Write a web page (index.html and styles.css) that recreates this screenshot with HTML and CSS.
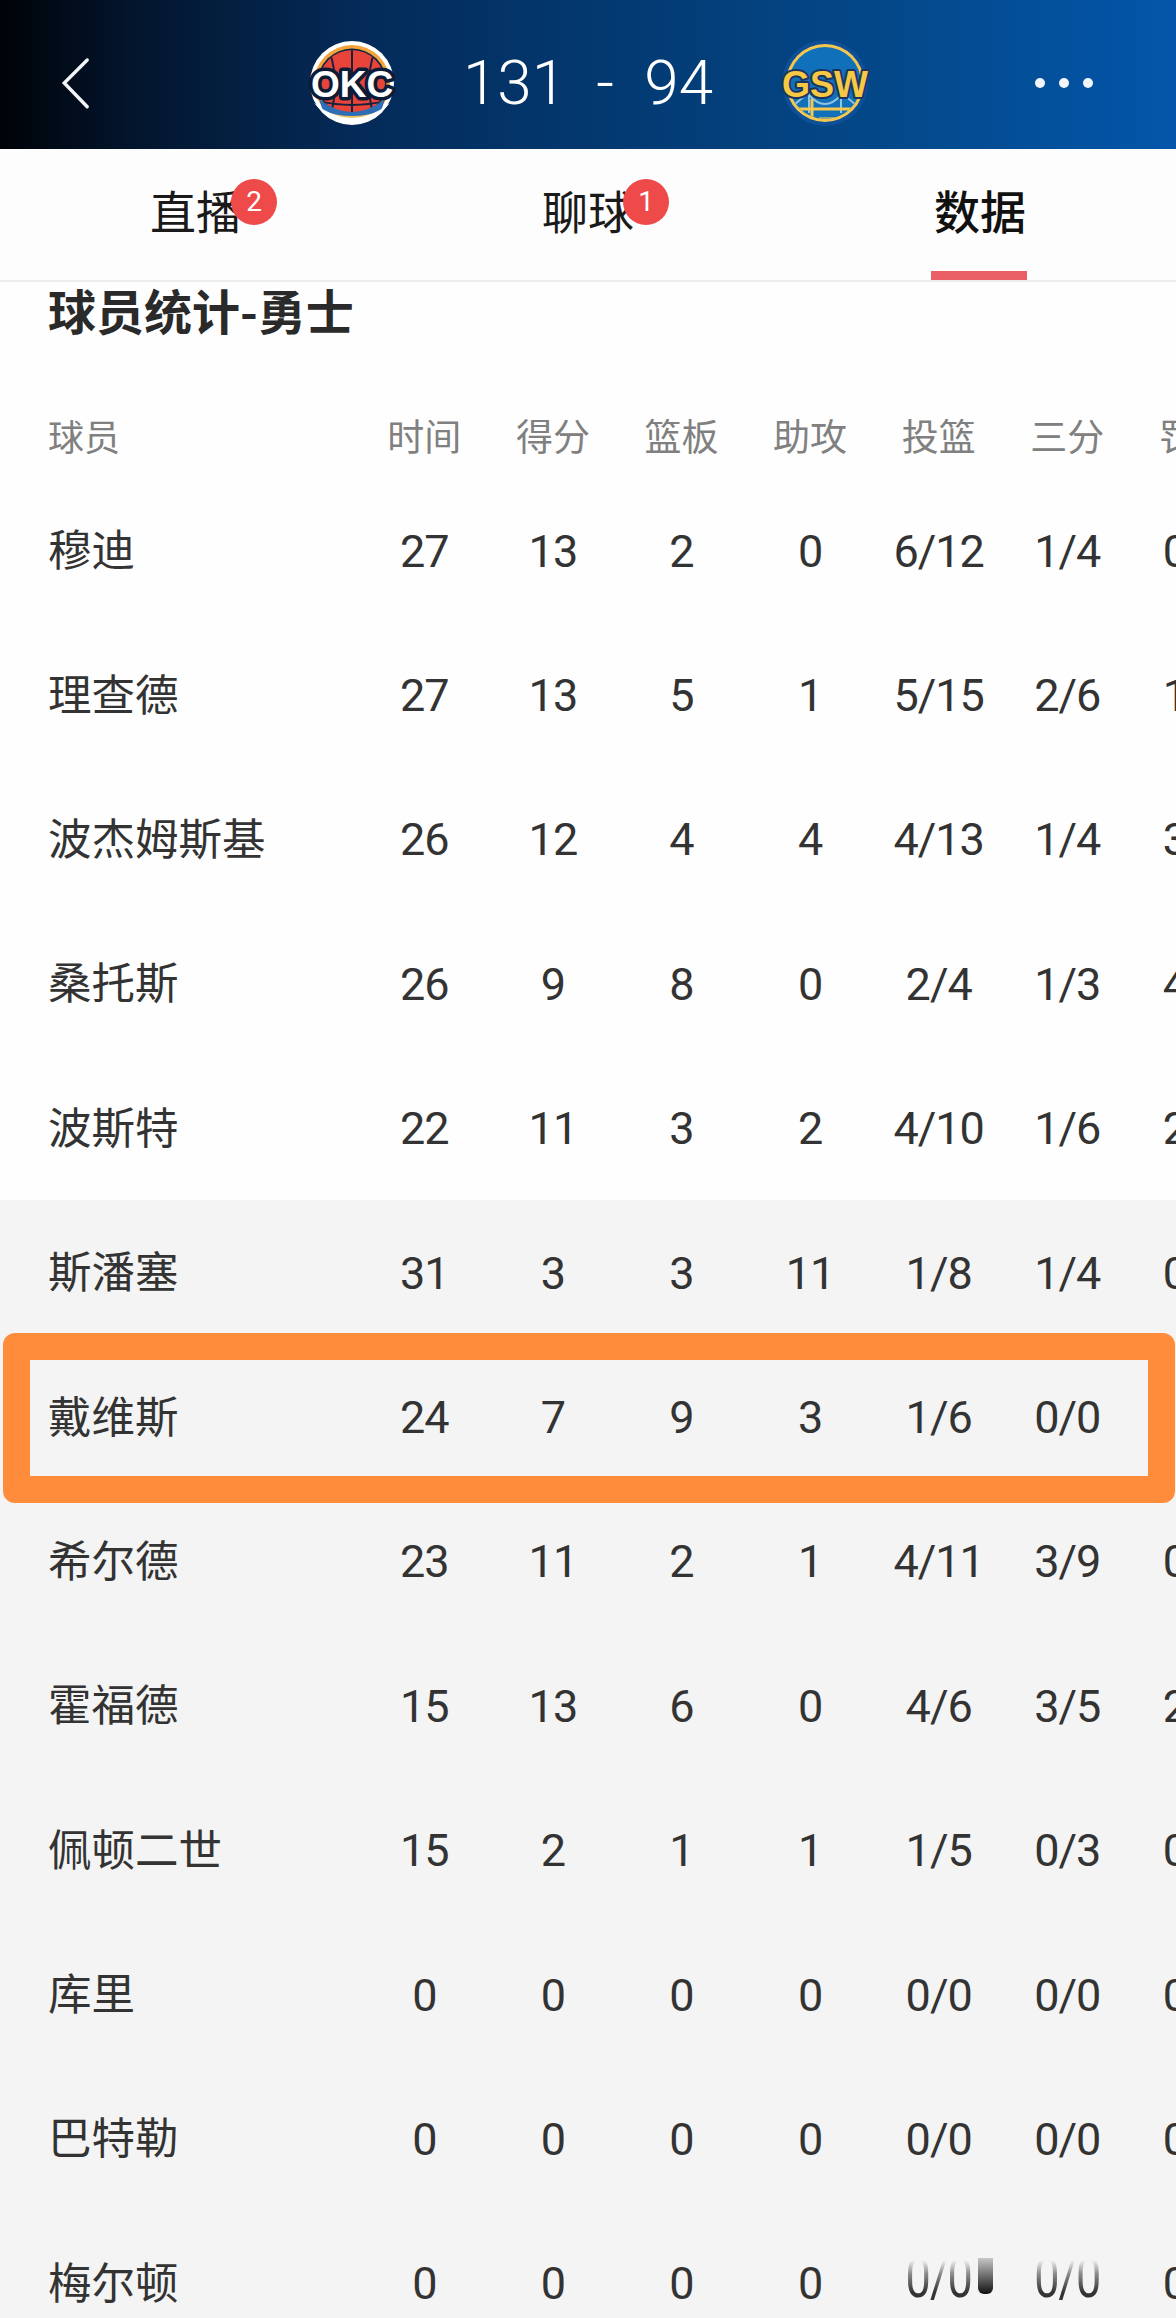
FILE: index.html
```html
<!DOCTYPE html>
<html lang="zh">
<head>
<meta charset="utf-8">
<title>球员统计-勇士</title>
<link rel="stylesheet" href="styles.css">
</head>
<body>
<header class="topbar">
  <div class="back">
    <svg class="back-icon" viewBox="0 0 40 60"><path d="M32 3 L5 30 L32 58"/></svg>
  </div>
  <div class="scoreline">
    <svg class="logo" viewBox="0 0 100 100">
      <defs><clipPath id="okcball"><circle cx="50" cy="50" r="33"/></clipPath></defs>
      <circle cx="50" cy="50" r="42" fill="#fff"/>
      <circle cx="50" cy="50" r="38" fill="#f2a33c"/>
      <circle cx="50" cy="50" r="34.5" fill="#0c2340"/>
      <circle cx="50" cy="50" r="33" fill="#e8443a"/>
      <g clip-path="url(#okcball)" stroke="#14213f" stroke-width="2" fill="none">
        <path d="M50 16V84"/><path d="M28 20Q38 50 28 84"/><path d="M72 20Q62 50 72 84"/><path d="M16 68Q50 76 84 68"/>
      </g>
      <path d="M17 66Q50 92 83 66L79 78Q50 96 21 78Z" fill="#2f6db5"/>
      <path d="M21 78Q50 100 79 78Q50 88 21 78Z" fill="#e9c25c"/>
      <path d="M12 70Q50 112 88 70Q50 100 12 70Z" fill="#fff"/>
      <text class="logo-text okc" x="50" y="64" text-anchor="middle">OKC</text>
    </svg>
    <div class="score"><span class="score-text">131&nbsp;&nbsp;-&nbsp;&nbsp;94</span></div>
    <svg class="logo" viewBox="0 0 100 100">
      <defs><clipPath id="gswball"><circle cx="50" cy="50" r="36"/></clipPath></defs>
      <circle cx="50" cy="50" r="43" fill="#0f4f97"/>
      <circle cx="50" cy="50" r="39" fill="#f4c74f"/>
      <circle cx="50" cy="50" r="36" fill="#1170ba"/>
      <g clip-path="url(#gswball)">
        <path d="M10 80Q30 62 34 60M34 60V80M34 62Q50 80 66 62M66 60V80M66 60Q72 64 90 80" stroke="#8fc3e0" stroke-width="2" fill="none"/>
        <path d="M14 76H86" stroke="#f4c74f" stroke-width="3"/>
        <path d="M37 66V88" stroke="#f4c74f" stroke-width="3"/>
        <path d="M14 84H34V90H14Z" fill="#f4c74f"/>
        <path d="M44 84H66V90H44Z" fill="#f4c74f" opacity=".6"/>
      </g>
      <text class="logo-text gsw" x="50" y="64" text-anchor="middle">GSW</text>
    </svg>
  </div>
  <div class="more">
    <span class="dot"></span><span class="dot"></span><span class="dot"></span>
  </div>
</header>

<nav class="tabs">
  <div class="tab"><span class="tab-label">直播<span class="badge">2</span></span></div>
  <div class="tab"><span class="tab-label">聊球<span class="badge">1</span></span></div>
  <div class="tab tab-active"><span class="tab-label">数据</span></div>
</nav>

<main class="stats">
  <h1 class="title">球员统计-勇士</h1>
  <div class="table">
    <div class="row row-head"><span class="name">球员</span><span>时间</span><span>得分</span><span>篮板</span><span>助攻</span><span>投篮</span><span>三分</span><span>罚球</span></div>
    <div class="row"><span class="name">穆迪</span><span>27</span><span>13</span><span>2</span><span>0</span><span>6/12</span><span>1/4</span><span>0/0</span></div>
    <div class="row"><span class="name">理查德</span><span>27</span><span>13</span><span>5</span><span>1</span><span>5/15</span><span>2/6</span><span>1/2</span></div>
    <div class="row"><span class="name">波杰姆斯基</span><span>26</span><span>12</span><span>4</span><span>4</span><span>4/13</span><span>1/4</span><span>3/4</span></div>
    <div class="row"><span class="name">桑托斯</span><span>26</span><span>9</span><span>8</span><span>0</span><span>2/4</span><span>1/3</span><span>4/4</span></div>
    <div class="row"><span class="name">波斯特</span><span>22</span><span>11</span><span>3</span><span>2</span><span>4/10</span><span>1/6</span><span>2/2</span></div>
    <div class="row row-bench"><span class="name">斯潘塞</span><span>31</span><span>3</span><span>3</span><span>11</span><span>1/8</span><span>1/4</span><span>0/0</span></div>
    <div class="row row-bench row-marked"><span class="name">戴维斯</span><span>24</span><span>7</span><span>9</span><span>3</span><span>1/6</span><span>0/0</span><div class="frame"></div></div>
    <div class="row row-bench"><span class="name">希尔德</span><span>23</span><span>11</span><span>2</span><span>1</span><span>4/11</span><span>3/9</span><span>0/0</span></div>
    <div class="row row-bench"><span class="name">霍福德</span><span>15</span><span>13</span><span>6</span><span>0</span><span>4/6</span><span>3/5</span><span>2/2</span></div>
    <div class="row row-bench"><span class="name">佩顿二世</span><span>15</span><span>2</span><span>1</span><span>1</span><span>1/5</span><span>0/3</span><span>0/0</span></div>
    <div class="row row-bench"><span class="name">库里</span><span>0</span><span>0</span><span>0</span><span>0</span><span>0/0</span><span>0/0</span><span>0/0</span></div>
    <div class="row row-bench"><span class="name">巴特勒</span><span>0</span><span>0</span><span>0</span><span>0</span><span>0/0</span><span>0/0</span><span>0/0</span></div>
    <div class="row row-bench row-last"><span class="name">梅尔顿</span><span>0</span><span>0</span><span>0</span><span>0</span><span class="smeared">0/0</span><span class="smeared">0/0</span><span>0/0</span><div class="fade"></div><div class="fade-bar"></div></div>
  </div>
</main>
</body>
</html>
```
FILE: styles.css
```css
* { box-sizing: border-box; }
html, body {
  margin: 0;
  width: 1176px;
  height: 2318px;
  overflow: hidden;
  background: #fefefe;
  font-family: "Roboto", "Noto Sans CJK SC", sans-serif;
}
.topbar {
  height: 149px;
  display: grid;
  grid-template-columns: 1fr auto 1fr;
  align-items: center;
  background: linear-gradient(90deg, #000308 0%, #03162f 12%, #042a58 30%, #03386f 50%, #044889 75%, #0356aa 100%);
  padding-top: 16px;
}
.back { padding-left: 60px; display: flex; }
.back-icon { width: 34px; height: 60px; }
.back-icon path { fill: none; stroke: #f4f6fa; stroke-width: 4; stroke-linecap: round; stroke-linejoin: miter; }
.scoreline { display: flex; align-items: center; }
.logo { width: 100px; height: 100px; display: block; overflow: visible; }
.logo-text { font-family: "Liberation Sans", sans-serif; font-weight: 700; font-size: 37px; paint-order: stroke; stroke-linejoin: round; }
.okc { fill: #fff; stroke: #0c1c38; stroke-width: 7px; }
.gsw { fill: #f7c843; stroke: #1c355f; stroke-width: 4px; font-size: 36px; }
.score { width: 373px; text-align: center; color: #fff; }
.score-text { display: inline-block; font-size: 62px; font-weight: 300; line-height: 72px; white-space: nowrap; }
.more { display: flex; justify-content: flex-end; gap: 14px; padding-right: 83px; }
.dot { width: 10px; height: 10px; border-radius: 50%; background: #f2f5fa; }

.tabs { height: 133px; display: grid; grid-template-columns: repeat(3, 1fr); border-bottom: 2px solid #eeeeee; background: #fdfdfd; }
.tab { position: relative; display: flex; justify-content: center; padding-top: 28px; color: #1a1a1a; font-size: 46px; line-height: 64px; font-family: "Noto Sans CJK SC", sans-serif; }
.tab-label { position: relative; width: 92px; height: 64px; white-space: nowrap; }
.badge { position: absolute; left: 81px; top: 2px; width: 46px; height: 46px; border-radius: 50%; background: #ef4a4a; color: #fff; font: 400 28px/46px "Roboto", sans-serif; text-align: center; }
.tab-active { font-weight: 500; color: #111; }
.tab-active::after { content: ""; position: absolute; left: 147px; bottom: 0; width: 96px; height: 9px; background: #ea5f66; }

.title { margin: 0 0 56px 48px; font-size: 48px; font-weight: 700; line-height: 54px; color: #2a2a2a; font-family: "Noto Sans CJK SC", sans-serif; white-space: nowrap; padding-bottom: 4px; }
.table { width: 1176px; }
.row { position: relative; width: 1176px; height: 144.4px; display: grid; grid-template-columns: 360px repeat(7, 128.6px); align-items: center; justify-items: center; font-size: 45px; color: #333; white-space: nowrap; }
.name { justify-self: start; padding-left: 48px; padding-bottom: 5px; font-family: "Noto Sans CJK SC", sans-serif; font-size: 43.5px; color: #333; }
.row > span:not(.name) { letter-spacing: -1px; padding-top: 2px; }
.row-head { height: 82px; font-size: 37px; color: #808080; font-family: "Noto Sans CJK SC", sans-serif; }
.row-head .name { font-size: 36px; color: #808080; }
.row-head > span:not(.name) { letter-spacing: 0; padding-top: 0; padding-bottom: 4px; }
.row-bench { background: #f4f4f4; }
.row-marked { z-index: 1; }
.frame { position: absolute; left: 3px; top: -11px; width: 1172px; height: 170px; border: 27px solid #ff8c3b; border-radius: 12px; }
.smeared { display: inline-block; transform: scaleY(1.22); transform-origin: center bottom; }
.fade { position: absolute; left: 904px; top: 40px; width: 200px; height: 46px; background: linear-gradient(180deg, #f4f4f4 20%, rgba(244, 244, 244, .45) 50%, rgba(244, 244, 244, 0) 90%); }
.fade-bar { position: absolute; left: 978px; top: 47px; width: 15px; height: 36px; border-radius: 0 0 6px 6px; background: linear-gradient(180deg, rgba(20, 20, 20, .2) 0%, #111 100%); }
```
